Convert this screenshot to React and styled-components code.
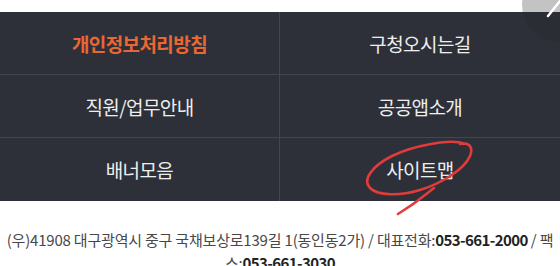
import React from 'react';
import styled, { createGlobalStyle } from 'styled-components';

const GlobalStyle = createGlobalStyle`
  html, body {
    margin: 0;
    padding: 0;
    background: #ffffff;
    font-family: 'Noto Sans CJK KR', 'Noto Sans', sans-serif;
    overflow: hidden;
  }
`;

const Page = styled.div`
  position: relative;
  width: 560px;
  height: 266px;
  padding-top: 12px;
  box-sizing: border-box;
  overflow: hidden;
`;

const LinkGrid = styled.nav`
  display: grid;
  grid-template-columns: 1fr 1fr;
  background: #2d3039;
`;

const LinkCell = styled.a`
  display: flex;
  align-items: center;
  justify-content: center;
  height: 63px;
  box-sizing: border-box;
  border-bottom: 1px solid #42464f;
  border-right: ${(p) => (p.$right ? 'none' : '1px solid #42464f')};
  color: ${(p) => (p.$highlight ? '#ea6734' : '#eeeeee')};
  font-size: 19px;
  font-weight: ${(p) => (p.$highlight ? 700 : 400)};
  letter-spacing: -0.6px;
  text-decoration: none;

  &:nth-last-child(-n + 2) {
    border-bottom: none;
  }
`;

const Address = styled.p`
  margin: 0;
  padding: 27px 6px 0;
  text-align: center;
  color: #484848;
  font-size: 15px;
  line-height: 23px;
  letter-spacing: -0.2px;
  word-break: break-all;

  b {
    font-weight: 700;
    color: #222;
    letter-spacing: -0.6px;
  }
`;

const TopButton = styled.div`
  position: absolute;
  top: -32px;
  right: -36px;
  width: 74px;
  height: 74px;
  border-radius: 50%;
  background: rgba(40, 40, 40, 0.28);
`;

const Doodle = styled.svg`
  position: absolute;
  left: 360px;
  top: 140px;
  pointer-events: none;
`;

const Slash = styled.svg`
  position: absolute;
  right: 0;
  top: 0;
  pointer-events: none;
`;

const links = [
  { label: '개인정보처리방침', highlight: true },
  { label: '구청오시는길' },
  { label: '직원/업무안내' },
  { label: '공공앱소개' },
  { label: '배너모음' },
  { label: '사이트맵' },
];

const App = () => (
  <Page>
    <GlobalStyle />
    <LinkGrid>
      {links.map((l, i) => (
        <LinkCell key={l.label} href="#" $highlight={l.highlight} $right={i % 2 === 1}>
          {l.label}
        </LinkCell>
      ))}
    </LinkGrid>
    <Address>
      (우)41908 대구광역시 중구 국채보상로139길 1(동인동2가) / 대표전화:<b>053-661-2000</b> / 팩스:<b>053-661-3030</b>
    </Address>
    <TopButton />
    <Slash width="20" height="20" viewBox="0 0 20 20">
      <path d="M8 16 L20 1" stroke="#ffffff" strokeWidth="2.5" strokeLinecap="round" />
    </Slash>
    <Doodle width="120" height="80" viewBox="0 0 120 80">
      <path
        d="M104 4 C92 -2 52 6 32 16 C12 26 2 40 10 48 C18 56 40 56 60 50 C80 44 104 30 110 16 C114 6 108 2 100 4 M74 48 C66 54 58 62 38 74"
        fill="none"
        stroke="#e23b3b"
        strokeWidth="2.6"
        strokeLinecap="round"
      />
    </Doodle>
  </Page>
);

export default App;
